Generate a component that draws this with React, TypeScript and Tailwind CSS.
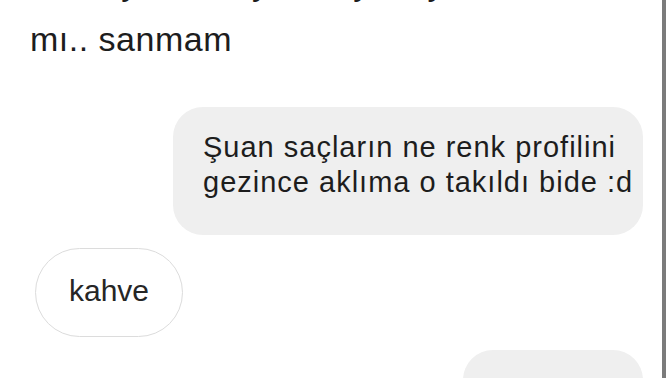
import React from "react";

export default function App() {
  return (
    <div
      className="w-[672px] h-[378px] overflow-hidden bg-white flex text-[#1d1d1d]"
      style={{ fontFamily: '"Liberation Sans", Arial, sans-serif' }}
    >
      <div className="w-[666px] h-full shrink-0 border-r-4 border-[#7b7b7b] flex flex-col overflow-hidden">
        <p className="shrink-0 mt-[-37px] ml-[30px] text-[34px] leading-[40px] tracking-[0.5px] whitespace-nowrap">
          Bunu yoksa o yoksa yine yazdınız bile
        </p>
        <p className="shrink-0 mt-[16px] ml-[30px] text-[34px] leading-[40px] tracking-[0.5px] whitespace-nowrap">
          mı.. sanmam
        </p>
        <div className="shrink-0 self-end mr-[19px] mt-[48px] w-[470px] h-[128px] rounded-[30px] bg-[#efefef] pl-[30px] pt-[23px] text-[29px] leading-[35px] tracking-[1px] whitespace-nowrap">
          <div>Şuan saçların ne renk profilini</div>
          <div>gezince aklıma o takıldı bide :d</div>
        </div>
        <div className="shrink-0 ml-[35px] mt-[13px] w-[148px] h-[89px] rounded-full border-[1.5px] border-[#dcdcdc] flex items-center justify-center pb-[3px] text-[30px] leading-[34px] text-[#262626]">
          kahve
        </div>
        <div className="shrink-0 self-end mr-[19px] mt-[13px] w-[180px] h-[80px] rounded-[30px] bg-[#efefef]" />
      </div>
    </div>
  );
}
